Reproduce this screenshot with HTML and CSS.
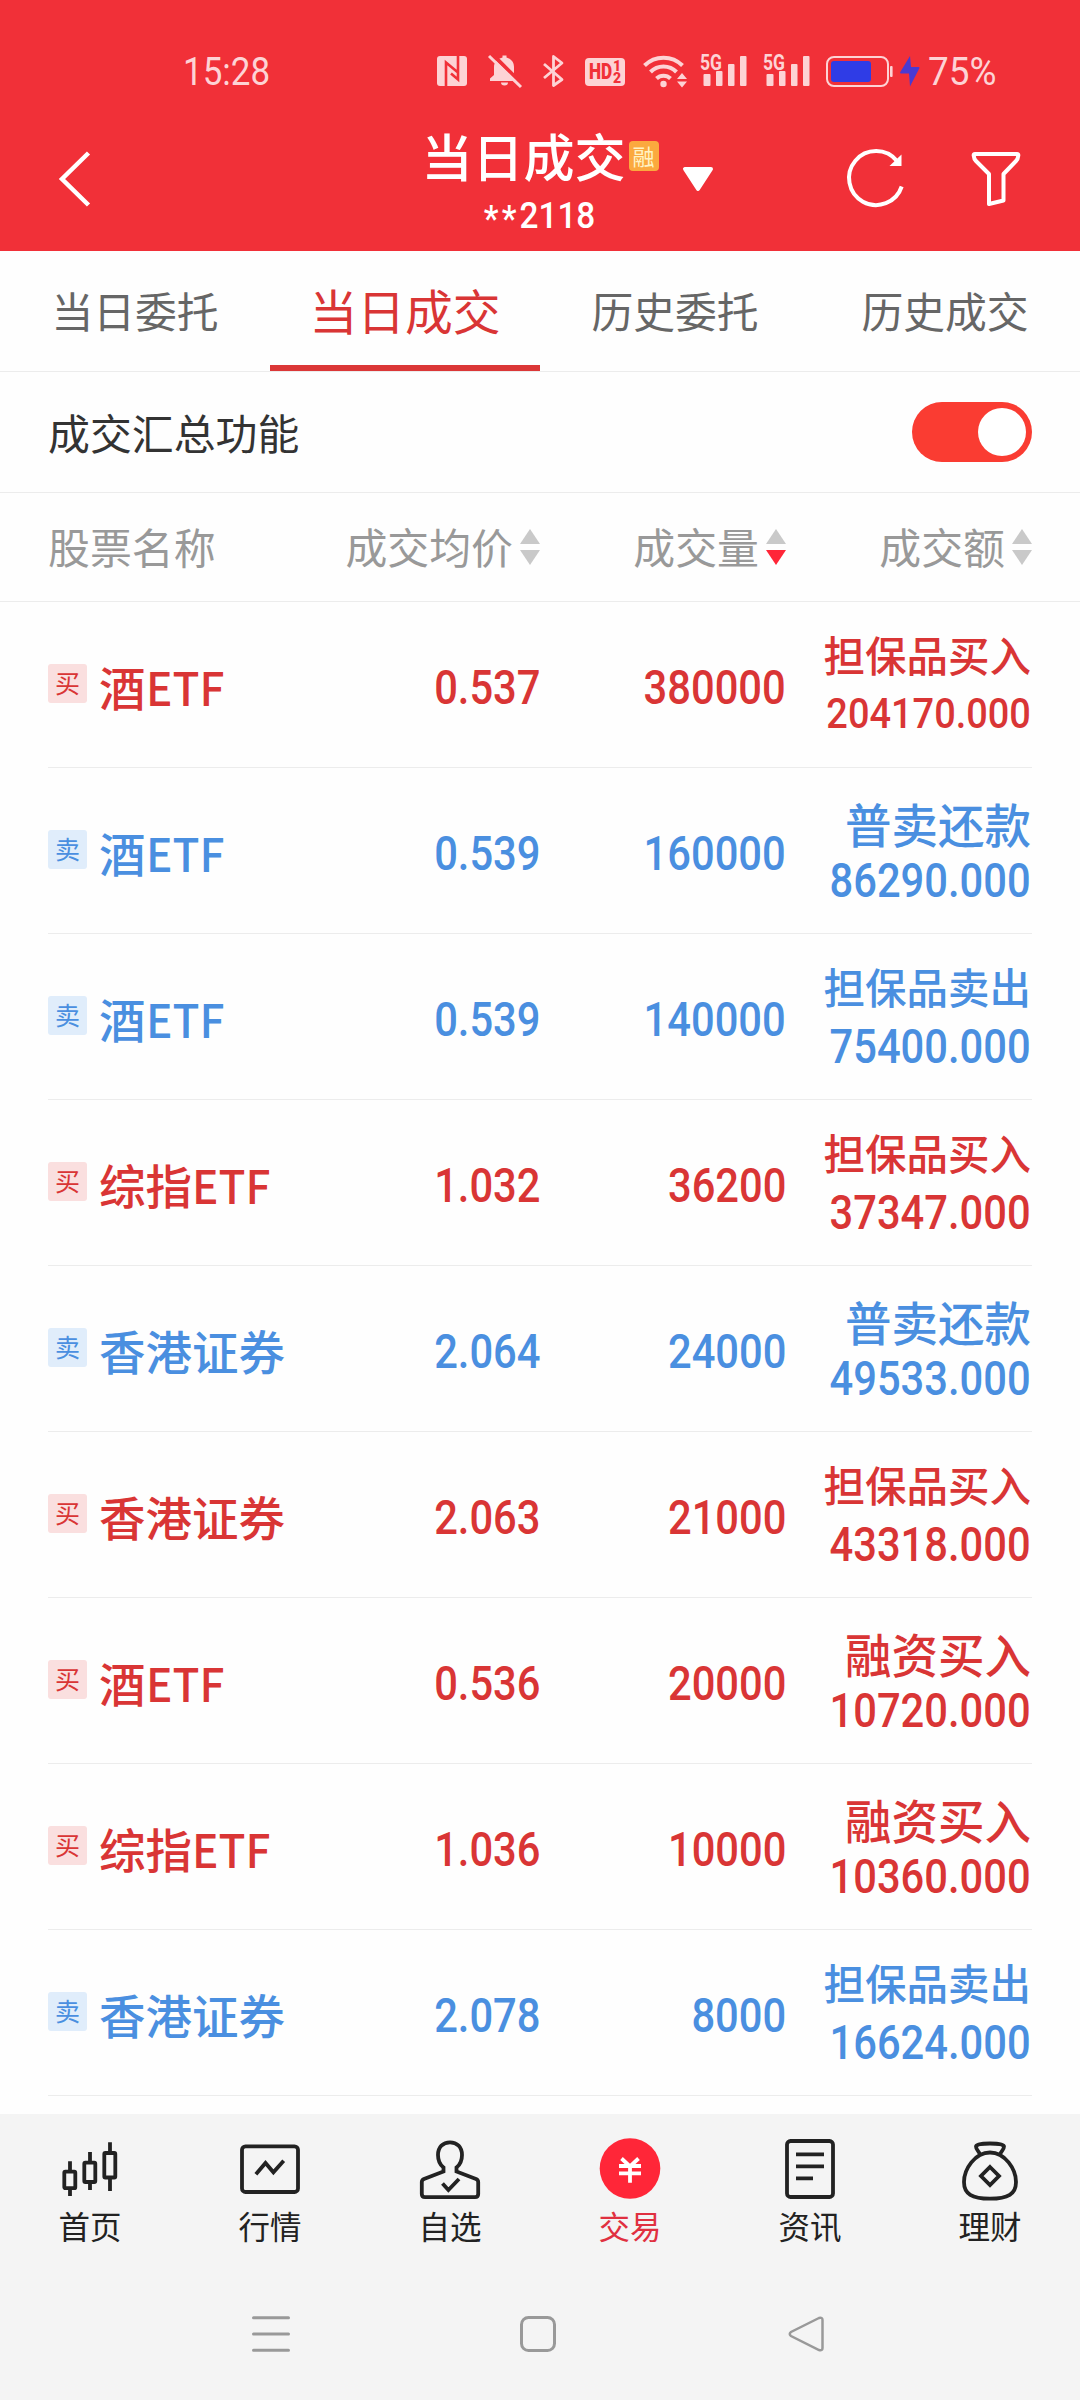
FILE: index.html
```html
<!DOCTYPE html>
<html lang="zh-CN">
  <head>
    <meta charset="UTF-8" />
    <meta name="viewport" content="width=device-width, initial-scale=1.0" />
    <title>当日成交</title>
    <link rel="stylesheet" href="styles.css">
  </head>
  <body>
    <header class="header">
      <div class="status">
        <span class="status-time"><span class="narrow">15:28</span></span>
        <svg class="nfc" width="30" height="36" viewBox="0 0 30 36">
          <rect x="0" y="3" width="30" height="30" rx="3" fill="#fdd3d5" />
          <path d="M9 33V9.500L21 19.500V3M9 33V16M21 3V26.500L14 20.500" fill="none" stroke="#f13038" stroke-width="2.600" />
        </svg>
        <svg class="bell" width="34" height="36" viewBox="0 0 34 36">
          <path d="M14.500 4.500V2.500h4v2C24 6 26 10 26 14v8l4 3.500v2.500H2v-2.500L6 22v-8c0-4 2.500-8 8.500-9.500zM13 29.500h7a3.500 3 0 0 1-7 0z" fill="#fdd3d5" />
          <path d="M3 0L35 32" stroke="#f13038" stroke-width="4" />
          <path d="M1 3L33 34" stroke="#fdd3d5" stroke-width="3" />
        </svg>
        <svg class="bt" width="23" height="36" viewBox="0 0 23 36">
          <path d="M2 11L20 26.500L11.500 32.500V3.500L20 10L2 25" fill="none" stroke="#fdd3d5" stroke-width="2.800" stroke-linejoin="round" />
        </svg>
        <span class="hd"><span class="hd-text">HD</span><span class="hd-num"><i>1</i><i>2</i></span></span>
        <svg class="wifi" width="45" height="36" viewBox="0 0 45 36">
          <g fill="none" stroke="#fdd3d5" stroke-width="4">
            <path d="M1.500 12.500A27 27 0 0 1 39.500 12.500" />
            <path d="M7.500 19A18 18 0 0 1 33.500 19" />
            <path d="M13.500 25.500A10 10 0 0 1 27.500 25.500" />
          </g>
          <circle cx="20.500" cy="31" r="3.200" fill="#fdd3d5" />
          <path d="M34 26l5-6 5 6zM34 28.500l5 6 5-6z" fill="#fdd3d5" />
        </svg>
        <svg class="signal" width="47" height="36" viewBox="0 0 47 36" fill="#fdd3d5">
          <text class="g5" x="0" y="16.500" textLength="22" lengthAdjust="spacingAndGlyphs">5G</text>
          <rect x="3.500" y="21" width="7" height="12" rx="1" />
          <rect x="16" y="18" width="6.500" height="15" rx="1" />
          <rect x="28" y="11" width="6.500" height="22" rx="1" />
          <rect x="40" y="3" width="6.500" height="30" rx="1" />
        </svg>
        <svg class="signal second" width="47" height="36" viewBox="0 0 47 36" fill="#fdd3d5">
          <text class="g5" x="0" y="16.500" textLength="22" lengthAdjust="spacingAndGlyphs">5G</text>
          <rect x="3.500" y="21" width="7" height="12" rx="1" />
          <rect x="16" y="18" width="6.500" height="15" rx="1" />
          <rect x="28" y="11" width="6.500" height="22" rx="1" />
          <rect x="40" y="3" width="6.500" height="30" rx="1" />
        </svg>
        <svg class="battery" width="67" height="36" viewBox="0 0 67 36">
          <rect x="1" y="4" width="61" height="29" rx="7" fill="none" stroke="#fdd3d5" stroke-width="2" />
          <rect x="5" y="8" width="40" height="21" rx="3" fill="#2f3ce6" />
          <rect x="64" y="13" width="2.600" height="11" rx="1" fill="#fdd3d5" />
        </svg>
        <svg class="bolt" width="20" height="36" viewBox="0 0 20 36">
          <path d="M10 3L0 19.500Q0 20.500 1 20.500H9L10 33.500L19.500 15Q19.500 14 18.500 14H11z" fill="#4a3ad2" />
        </svg>
        <span class="percent narrow">75%</span>
      </div>

      <div class="titlebar">
        <div class="title-left">
          <svg width="34" height="58" viewBox="0 0 34 58">
            <path d="M30.500 3L4 29L30.500 55" fill="none" stroke="#fff" stroke-width="4.500" />
          </svg>
        </div>
        <div class="title-center">
          <div class="title"><h1>当日成交</h1><span class="rong">融</span></div>
          <div class="account"><span class="stars">**</span>2118</div>
        </div>
        <div class="title-right">
          <svg class="caret" width="30" height="24" viewBox="0 0 30 24">
            <path d="M2 2H28L15 22z" fill="#fff" stroke="#fff" stroke-width="4" stroke-linejoin="round" />
          </svg>
          <svg class="refresh" width="60" height="60" viewBox="0 0 60 60">
            <path d="M54.700 37.500A27 27 0 1 1 50 12" fill="none" stroke="#fff" stroke-width="4" />
            <path d="M54.500 5.500V17H42.500z" fill="#fff" />
          </svg>
          <svg width="52" height="60" viewBox="0 0 52 60">
            <path d="M5 5H47Q48.500 5 48.300 6.500Q48 10 46 12L33.500 25V51.500L19 55V25L6 12Q4 10 3.700 6.500Q3.500 5 5 5z" fill="none" stroke="#fff" stroke-width="4" stroke-linejoin="round" />
          </svg>
        </div>
      </div>
    </header>

    <nav class="tabs">
      <a class="tab">当日委托</a>
      <a class="tab active">当日成交</a>
      <a class="tab">历史委托</a>
      <a class="tab">历史成交</a>
    </nav>

    <div class="summary">
      <span class="summary-label">成交汇总功能</span>
      <div class="toggle"><div class="knob"></div></div>
    </div>

    <div class="thead">
      <div>股票名称</div>
      <div class="right">成交均价<span class="sort"><i class="up"></i><i class="down"></i></span></div>
      <div class="right">成交量<span class="sort"><i class="up"></i><i class="down on"></i></span></div>
      <div class="right">成交额<span class="sort"><i class="up"></i><i class="down"></i></span></div>
    </div>

    <main class="list">
      <div class="row buy">
        <div class="name"><span class="tag">买</span>酒<span class="etf">ETF</span></div>
        <div class="num"><span>0.537</span></div>
        <div class="num"><span>380000</span></div>
        <div class="amount"><div class="kind small">担保品买入</div><div class="num tight"><span>204170.000</span></div></div>
      </div>
      <div class="row sell">
        <div class="name"><span class="tag">卖</span>酒<span class="etf">ETF</span></div>
        <div class="num"><span>0.539</span></div>
        <div class="num"><span>160000</span></div>
        <div class="amount"><div class="kind">普卖还款</div><div class="num"><span>86290.000</span></div></div>
      </div>
      <div class="row sell">
        <div class="name"><span class="tag">卖</span>酒<span class="etf">ETF</span></div>
        <div class="num"><span>0.539</span></div>
        <div class="num"><span>140000</span></div>
        <div class="amount"><div class="kind small">担保品卖出</div><div class="num"><span>75400.000</span></div></div>
      </div>
      <div class="row buy">
        <div class="name"><span class="tag">买</span>综指<span class="etf">ETF</span></div>
        <div class="num"><span>1.032</span></div>
        <div class="num"><span>36200</span></div>
        <div class="amount"><div class="kind small">担保品买入</div><div class="num"><span>37347.000</span></div></div>
      </div>
      <div class="row sell">
        <div class="name"><span class="tag">卖</span>香港证券</div>
        <div class="num"><span>2.064</span></div>
        <div class="num"><span>24000</span></div>
        <div class="amount"><div class="kind">普卖还款</div><div class="num"><span>49533.000</span></div></div>
      </div>
      <div class="row buy">
        <div class="name"><span class="tag">买</span>香港证券</div>
        <div class="num"><span>2.063</span></div>
        <div class="num"><span>21000</span></div>
        <div class="amount"><div class="kind small">担保品买入</div><div class="num"><span>43318.000</span></div></div>
      </div>
      <div class="row buy">
        <div class="name"><span class="tag">买</span>酒<span class="etf">ETF</span></div>
        <div class="num"><span>0.536</span></div>
        <div class="num"><span>20000</span></div>
        <div class="amount"><div class="kind">融资买入</div><div class="num"><span>10720.000</span></div></div>
      </div>
      <div class="row buy">
        <div class="name"><span class="tag">买</span>综指<span class="etf">ETF</span></div>
        <div class="num"><span>1.036</span></div>
        <div class="num"><span>10000</span></div>
        <div class="amount"><div class="kind">融资买入</div><div class="num"><span>10360.000</span></div></div>
      </div>
      <div class="row sell">
        <div class="name"><span class="tag">卖</span>香港证券</div>
        <div class="num"><span>2.078</span></div>
        <div class="num"><span>8000</span></div>
        <div class="amount"><div class="kind small">担保品卖出</div><div class="num"><span>16624.000</span></div></div>
      </div>
    </main>

    <footer class="footer">
      <nav class="menu">
        <a class="item">
          <svg viewBox="0 0 64 64">
            <rect x="6.300" y="33.700" width="11" height="16.500" rx="1" />
            <rect x="26.300" y="24.700" width="11" height="19.300" rx="1" />
            <rect x="46.300" y="15" width="11" height="24.500" rx="1" />
            <path d="M12 23.300V33M12 51V58M32 14V24M32 45V52M52 4.300V14M52 41V53" />
          </svg>
          首页
        </a>
        <a class="item">
          <svg viewBox="0 0 64 64">
            <rect x="4" y="8.300" width="56" height="45.700" rx="3.500" />
            <path d="M17.900 36.300L27.500 25L35.400 34.300L45.700 22.700" />
          </svg>
          行情
        </a>
        <a class="item">
          <svg viewBox="0 0 64 64">
            <path d="M25.500 33.500V29.500C21 26 20 22 20 17C20 9 25 4.300 32 4.300S44 9 44 17C44 22 43 26 38.500 29.500V33.500L58 41Q60.200 42 60.200 44V56Q60.200 59.200 57 59.200H7Q3.800 59.200 3.800 56V44Q3.800 42 6 41z" />
            <path d="M24.500 45.500L30.400 52L41 41" />
          </svg>
          自选
        </a>
        <a class="item current">
          <svg viewBox="0 0 64 64">
            <circle cx="32" cy="30.500" r="30.300" />
            <path d="M23.500 20.500L32 28.500L40.500 20.500M21 28H43M21 35.300H43M32 28V44.700" />
          </svg>
          交易
        </a>
        <a class="item">
          <svg viewBox="0 0 64 64">
            <rect x="9" y="3" width="46" height="56" rx="3.500" />
            <path d="M18 16.300H46M18 28.300H46M18 40.300H35" />
          </svg>
          资讯
        </a>
        <a class="item">
          <svg viewBox="0 0 64 64">
            <path d="M32 14.500C47 14.500 58 31 58 44C58 56 50 60.700 32 60.700S6 56 6 44C6 31 17 14.500 32 14.500z" />
            <path d="M22 16.500C21 13 18 12 18 8.500C18 4.500 46 4.500 46 8.500C46 12 43 13 42 16.500" />
            <path d="M32 29L41 38L32 47L23 38z" />
          </svg>
          理财
        </a>
      </nav>
      <div class="sysnav">
        <svg width="40" height="40" viewBox="0 0 40 40"><path d="M3.500 3.700H38.500M3.500 20H38.500M3.500 36.300H38.500" stroke-linecap="round" /></svg>
        <svg width="40" height="40" viewBox="0 0 40 40"><rect x="3.500" y="3.500" width="33" height="33" rx="7" /></svg>
        <svg width="40" height="40" viewBox="0 0 40 40"><path d="M33 4L5 18Q2.500 20 5 22L33 36Q36.500 37 36.500 34V6Q36.500 3 33 4z" stroke-width="2.500" /></svg>
      </div>
    </footer>
  </body>
</html>
```

FILE: styles.css
```css
* {
  box-sizing: border-box;
}
body {
  margin: 0;
  height: 2400px;
  display: flex;
  flex-direction: column;
  background: #fefefe;
  color: #333;
  font-family: "Noto Sans CJK SC", sans-serif;
  overflow: hidden;
}
i {
  font-style: normal;
}
svg {
  display: block;
  flex: none;
  overflow: visible;
}

/* header */
.header {
  height: 251px;
  background: #f13038;
  color: #fff;
}
.status {
  display: flex;
  align-items: flex-start;
  height: 108px;
  padding: 53px 0 0 183px;
  color: #fdd3d5;
  font-family: Roboto, sans-serif;
}
.status-time {
  width: 254px;
}
.narrow {
  display: inline-block;
  font-size: 38px;
  line-height: 38px;
  transform: scaleX(0.92);
  transform-origin: left center;
}
.bell {
  margin-left: 21px;
}
.bt {
  margin-left: 20px;
}
.hd {
  display: flex;
  align-items: center;
  width: 40px;
  height: 28px;
  margin: 5px 0 0 20px;
  padding-left: 4px;
  border-radius: 4px;
  background: #fdd3d5;
  color: #f13038;
  font-weight: 900;
}
.hd-text {
  width: 24px;
  font-size: 22px;
  line-height: 28px;
  transform: scaleX(0.78);
  transform-origin: left center;
}
.hd-num {
  display: flex;
  flex-direction: column;
  font-size: 14px;
  line-height: 12px;
}
.wifi {
  margin-left: 18px;
}
.signal {
  margin-left: 12px;
}
.signal.second {
  margin-left: 16px;
}
.g5 {
  font-family: Roboto, sans-serif;
  font-size: 22px;
  font-weight: 700;
}
.battery {
  margin-left: 16px;
}
.bolt {
  margin-left: 7px;
}
.percent {
  margin-left: 8px;
  transform: scaleX(0.97);
}

.titlebar {
  display: grid;
  grid-template-columns: 1fr auto 1fr;
  height: 143px;
}
.title-left {
  padding: 42px 0 0 58px;
}
.title {
  display: flex;
  align-items: flex-start;
  padding-top: 17px;
}
.title h1 {
  margin: 0;
  font-size: 51px;
  line-height: 60px;
  font-weight: 500;
}
.rong {
  width: 30px;
  height: 30px;
  margin: 16px 0 0 3px;
  border-radius: 4px;
  background: #fba93e;
  color: #fff3c4;
  font-size: 22px;
  line-height: 29px;
  text-align: center;
}
.account {
  display: flex;
  justify-content: center;
  font-family: Roboto, sans-serif;
  font-size: 37px;
  line-height: 40px;
  font-weight: 500;
  padding-top: 11px;
  transform: scaleX(0.9);
}
.stars {
  padding-top: 3px;
  letter-spacing: 3.5px;
}
.title-right {
  display: flex;
  align-items: flex-start;
  padding: 41px 58px 0 24px;
}
.caret {
  margin-top: 18px;
}
.refresh {
  margin: 0 63px 0 auto;
}

/* tabs */
.tabs {
  display: flex;
  height: 121px;
  border-bottom: 1px solid #ececec;
}
.tab {
  flex: 1;
  height: 120px;
  color: #666;
  font-size: 41.8px;
  line-height: 118px;
  text-align: center;
}
.tab.active {
  color: #d93535;
  font-size: 47.8px;
  border-bottom: 6px solid #db3737;
}

.summary {
  display: flex;
  justify-content: space-between;
  align-items: center;
  height: 121px;
  padding: 0 48px;
  border-bottom: 1px solid #ececec;
  font-size: 41.9px;
}
.summary-label {
  padding-bottom: 2px;
}
.toggle {
  display: flex;
  justify-content: flex-end;
  width: 120px;
  height: 60px;
  padding: 6px;
  border-radius: 30px;
  background: #fa3c32;
}
.knob {
  width: 48px;
  height: 48px;
  border-radius: 50%;
  background: #fff;
}

/* table */
.thead,
.row {
  display: grid;
  grid-template-columns: 270px 222px 246px 246px;
}
.thead {
  height: 109px;
  padding: 0 48px;
  border-bottom: 1px solid #ececec;
  color: #999;
  font-size: 41.9px;
  line-height: 106px;
}
.right {
  display: flex;
  justify-content: flex-end;
}
.sort {
  display: flex;
  flex-direction: column;
  gap: 6px;
  margin: 36px 0 0 7px;
}
.up,
.down {
  border-left: 10.5px solid transparent;
  border-right: 10.5px solid transparent;
}
.up {
  border-bottom: 15px solid #c9c9c9;
}
.down {
  border-top: 15px solid #c9c9c9;
}
.down.on {
  border-top-color: #ff2638;
}
.list {
  padding: 0 48px;
  height: 1512px;
}
.row {
  height: 166px;
  border-bottom: 1px solid #ececec;
}
.buy {
  color: #d93535;
}
.sell {
  color: #4a8fe0;
}
.name {
  display: flex;
  align-items: flex-start;
  padding-top: 54px;
  font-size: 46.5px;
  line-height: 60px;
  font-weight: 500;
  white-space: nowrap;
}
.etf {
  transform: scaleX(0.95);
  transform-origin: left center;
}
.tag {
  width: 39px;
  height: 39px;
  margin: 8px 12px 0 0;
  border-radius: 3px;
  font-size: 25px;
  line-height: 37px;
  font-weight: 400;
  text-align: center;
}
.buy .tag {
  background: #fadfdf;
}
.sell .tag {
  background: #e0edfb;
}
.num {
  padding-top: 61px;
  font-family: Roboto, sans-serif;
  font-size: 48px;
  line-height: 50px;
  font-weight: 500;
  text-align: right;
}
.num span {
  display: inline-block;
  transform: scaleX(0.868);
  transform-origin: right center;
}
.amount {
  display: flex;
  flex-direction: column;
  padding-top: 25px;
}
.kind {
  height: 63px;
  padding-right: 1px;
  font-size: 46.5px;
  line-height: 60px;
  font-weight: 500;
  text-align: right;
}
.kind.small {
  font-size: 41.5px;
  line-height: 55px;
}
.amount .num {
  padding-top: 0;
  padding-right: 1px;
}
.amount .tight {
  font-size: 43px;
  line-height: 46px;
}
.tight span {
  transform: scaleX(0.882);
}

/* bottom */
.footer {
  flex: 1;
  background: #f4f4f4;
}
.menu {
  display: flex;
}
.item {
  flex: 1;
  display: flex;
  flex-direction: column;
  align-items: center;
  padding-top: 24px;
  color: #222;
  font-size: 31.5px;
  line-height: 46px;
}
.item svg {
  width: 64px;
  height: 64px;
  fill: none;
  stroke: #222;
  stroke-width: 3.8;
}
.current {
  color: #e03040;
}
.current svg {
  stroke: #fff;
}
.current circle {
  fill: #ff2638;
  stroke: none;
}
.sysnav {
  display: flex;
  gap: 228px;
  padding: 66px 0 0 250px;
}
.sysnav svg {
  fill: none;
  stroke: #999;
  stroke-width: 3;
}
```
